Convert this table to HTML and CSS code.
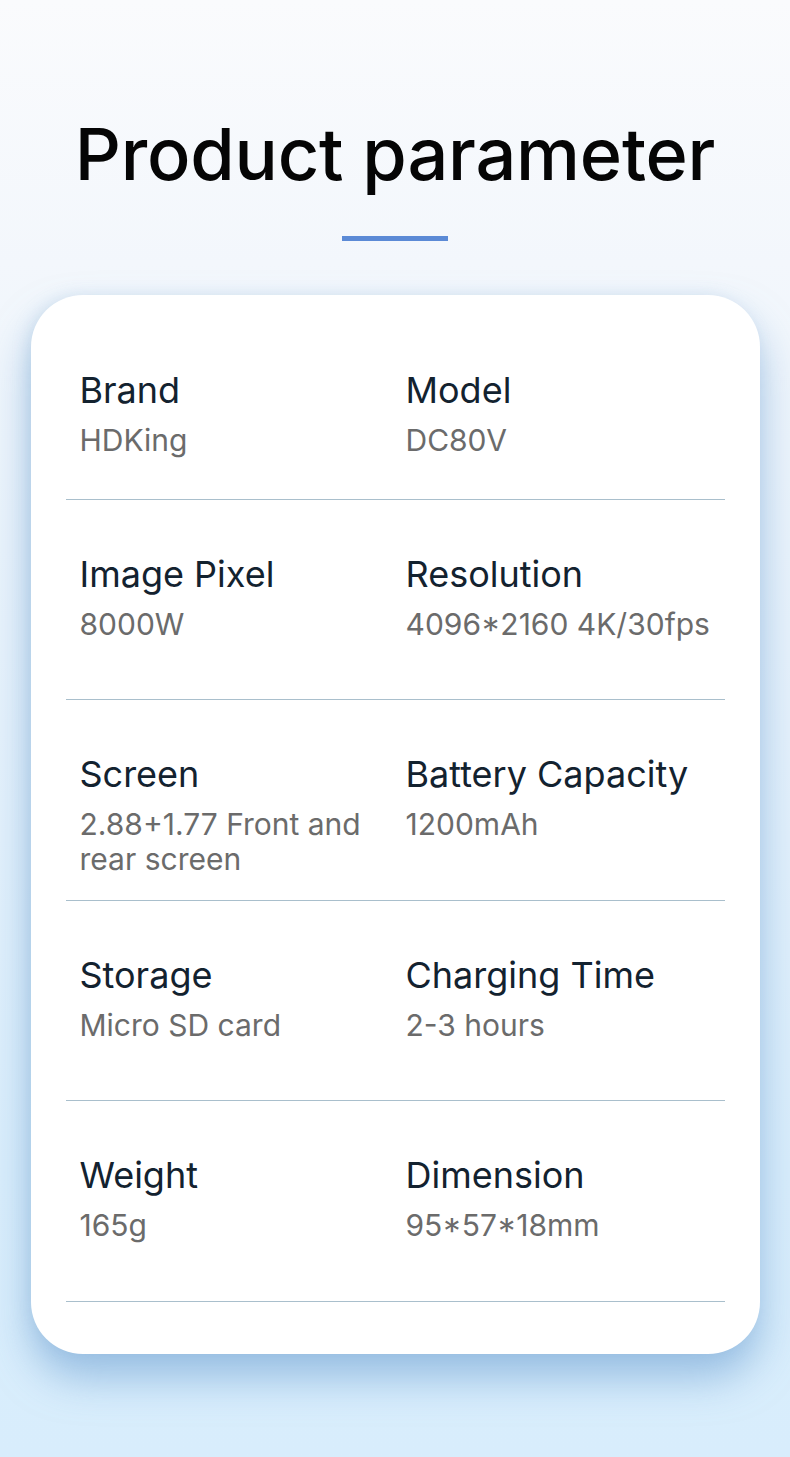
FILE: index.html
```html
<!DOCTYPE html>
<html lang="en">
<head>
<meta charset="utf-8">
<title>Product parameter</title>
<link rel="stylesheet" href="styles.css">
</head>
<body>
<main class="page">
  <header class="head">
    <h1 class="title">Product parameter</h1>
    <div class="accent"></div>
  </header>
  <section class="card">
    <div class="row">
      <div class="cell"><div class="label">Brand</div><div class="value">HDKing</div></div>
      <div class="cell"><div class="label">Model</div><div class="value">DC80V</div></div>
    </div>
    <div class="row">
      <div class="cell"><div class="label">Image Pixel</div><div class="value">8000W</div></div>
      <div class="cell"><div class="label">Resolution</div><div class="value">4096*2160 4K/30fps</div></div>
    </div>
    <div class="row row-tall">
      <div class="cell"><div class="label">Screen</div><div class="value">2.88+1.77 Front and rear screen</div></div>
      <div class="cell"><div class="label">Battery Capacity</div><div class="value">1200mAh</div></div>
    </div>
    <div class="row">
      <div class="cell"><div class="label">Storage</div><div class="value">Micro SD card</div></div>
      <div class="cell"><div class="label">Charging Time</div><div class="value">2-3 hours</div></div>
    </div>
    <div class="row row-tall">
      <div class="cell"><div class="label">Weight</div><div class="value">165g</div></div>
      <div class="cell"><div class="label">Dimension</div><div class="value">95*57*18mm</div></div>
    </div>
  </section>
</main>
</body>
</html>
```

FILE: styles.css
```css
html, body {
  margin: 0;
  padding: 0;
}
body {
  width: 790px;
  height: 1457px;
  overflow: hidden;
  background: linear-gradient(180deg, #fafbfd 0%, #f3f7fc 18%, #e6f2fc 50%, #daeefc 80%, #d8edfc 100%);
  font-family: Inter, "Noto Sans", "Liberation Sans", sans-serif;
}
.page {
  display: flex;
  flex-direction: column;
  align-items: center;
}
.head {
  display: flex;
  flex-direction: column;
  align-items: center;
  padding-top: 114px;
}
.title {
  margin: 0;
  font-size: 72px;
  line-height: 80px;
  font-weight: 500;
  color: #050505;
  letter-spacing: -0.2px;
}
.accent {
  width: 106px;
  height: 5px;
  background: #5b8ad6;
  margin-top: 42px;
}
.card {
  margin-top: 54px;
  width: 729px;
  box-sizing: border-box;
  background: #ffffff;
  border-radius: 52px;
  padding: 0 35px 52px;
  box-shadow: 0 24px 40px rgba(110, 160, 210, 0.6), -4px 0 14px rgba(180, 205, 230, 0.35);
}
.row {
  display: grid;
  grid-template-columns: 326px 1fr;
  box-sizing: border-box;
  height: 200px;
  padding: 54px 0 0 14px;
  border-bottom: 1px solid #a9bfcc;
}
.row:first-child {
  height: 205px;
  padding-top: 75px;
}
.row-tall {
  height: 201px;
}
.cell {
  display: flex;
  flex-direction: column;
  padding-right: 14px;
}
.label {
  font-size: 36px;
  line-height: 40px;
  color: #13222f;
  font-weight: 400;
}
.value {
  margin-top: 13px;
  font-size: 30px;
  line-height: 35px;
  color: #6b6b6b;
  font-weight: 400;
}
```
